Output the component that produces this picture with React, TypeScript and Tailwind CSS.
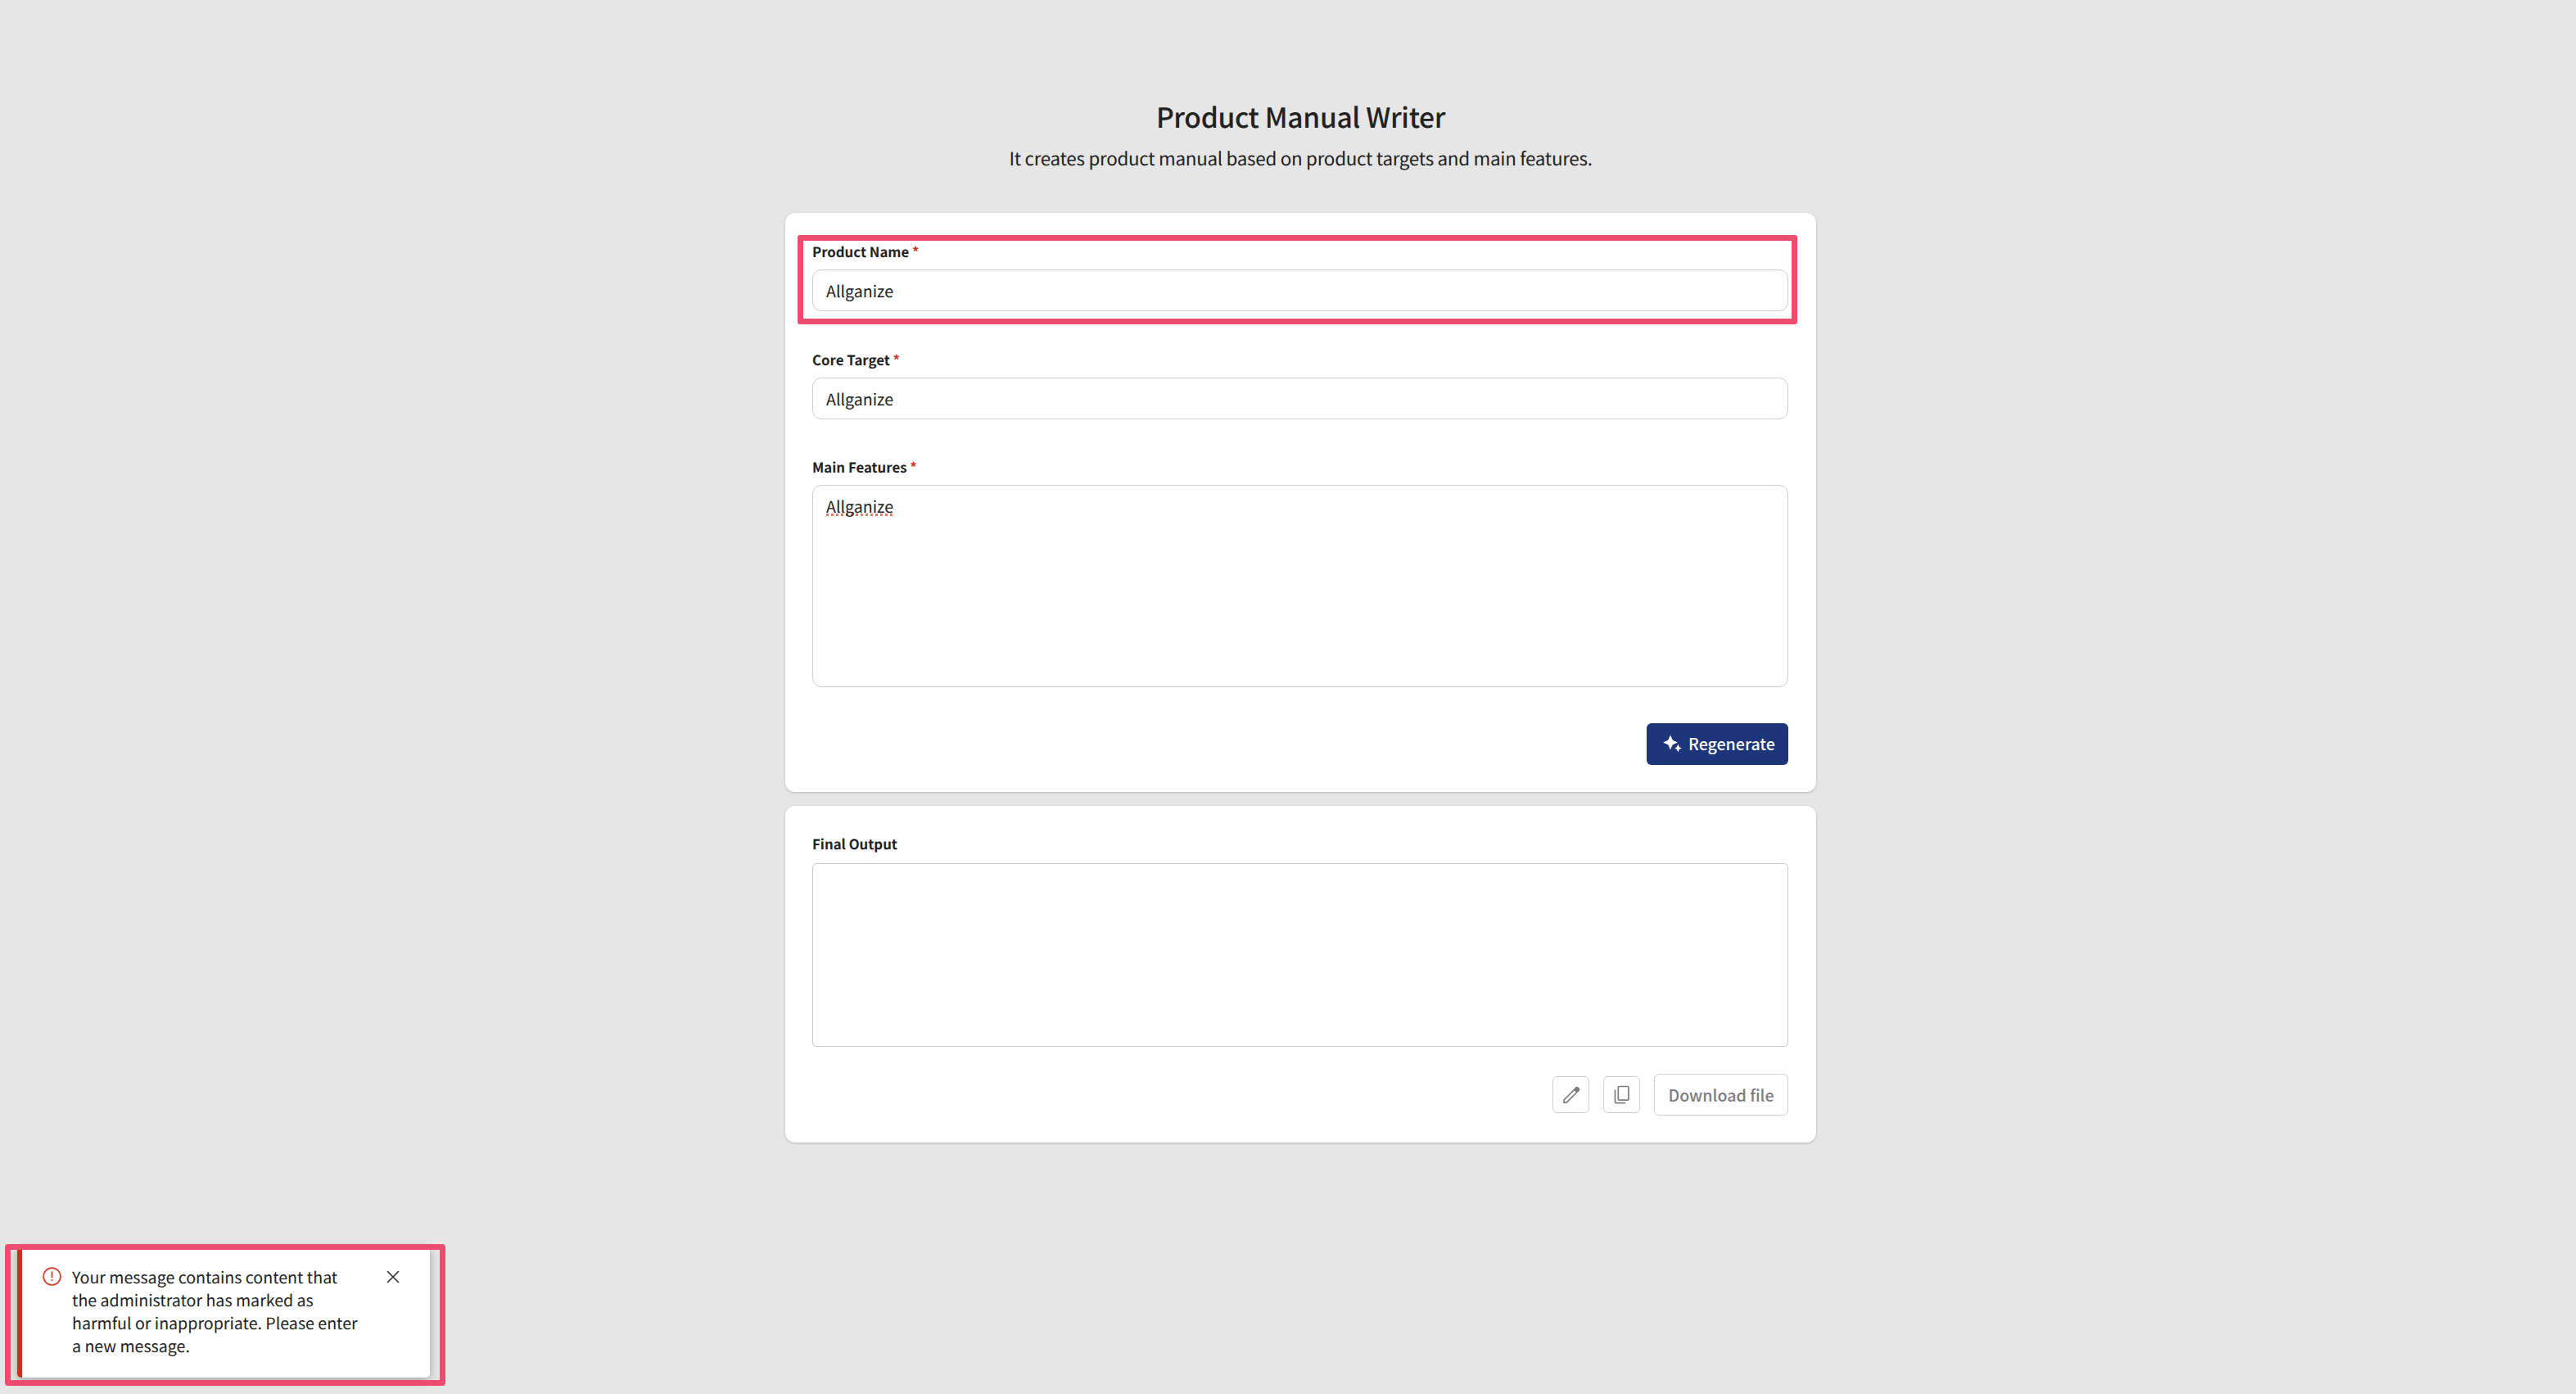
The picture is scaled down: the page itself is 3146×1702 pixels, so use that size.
import { ReactNode } from "react";

const fontStack = { fontFamily: '"Noto Sans CJK KR", "Noto Sans CJK JP", sans-serif' };

interface FieldItem {
  id: string;
  label: string;
  value: string;
  multiline?: boolean;
  highlighted?: boolean;
}

const fields: FieldItem[] = [
  { id: "name", label: "Product Name", value: "Allganize", highlighted: true },
  { id: "target", label: "Core Target", value: "Allganize" },
  { id: "features", label: "Main Features", value: "Allganize", multiline: true },
];

function SparkleIcon() {
  return (
    <svg className="h-[22px] w-[24px] shrink-0" viewBox="0 0 24 22" fill="currentColor">
      <path d="M10 0.500L12.300 5.700Q12.800 6.800 13.800 7.200L19 9.500L13.800 11.800Q12.800 12.200 12.300 13.300L10 18.500L7.700 13.300Q7.200 12.200 6.200 11.800L1 9.500L6.200 7.200Q7.200 6.800 7.700 5.700Z" />
      <path d="M19.400 11.500L20.500 14.300Q20.800 15.100 21.600 15.400L23.800 16.500L21.600 17.600Q20.800 17.900 20.500 18.700L19.400 21.500L18.300 18.700Q18 17.900 17.200 17.600L15 16.500L17.200 15.400Q18 15.100 18.300 14.300Z" />
    </svg>
  );
}

function PencilIcon() {
  return (
    <svg className="h-[22px] w-[22px]" viewBox="0 0 22 22" fill="none" stroke="currentColor" strokeWidth="1.700">
      <path d="M2 20.200V17L17.200 2L20.200 5L5.200 20.200Z" />
      <path d="M14.800 4.400L17.300 1.900Q18 1.300 18.700 1.900L20.200 3.400Q20.800 4.200 20.200 4.900L17.700 7.400Z" fill="currentColor" />
    </svg>
  );
}

function CopyIcon() {
  return (
    <svg className="h-[24px] w-[20px]" viewBox="0 0 20 24" fill="none" stroke="currentColor" strokeWidth="1.700">
      <rect x="5.300" y="1.500" width="12.600" height="16.700" rx="1.200" />
      <path d="M1.500 5.500V20.200Q1.500 21.700 3 21.700H14.200" />
    </svg>
  );
}

function Card({ children, className }: { children: ReactNode; className: string }) {
  return (
    <section
      className={`w-[1259px] rounded-[12px] bg-white pr-[34px] pl-[33px] shadow-[0_1px_3px_rgba(0,0,0,0.22)] ${className}`}
    >
      {children}
    </section>
  );
}

function Field({ field }: { field: FieldItem }) {
  return (
    <div className="relative">
      <label className="block h-[42px] text-[16.800px] leading-[41px] font-bold" htmlFor={field.id}>
        {field.label} <span className="text-[#d0341c]">*</span>
      </label>
      <div
        id={field.id}
        className={`rounded-[11px] border border-[#cfcfcf] px-4 text-[19.600px] ${
          field.multiline ? "h-[247px] pt-[11px] leading-[28px]" : "h-[51px] leading-[49px]"
        }`}
      >
        {field.multiline ? (
          <span className="underline decoration-[#fa7468] decoration-dotted decoration-[3px] underline-offset-1 [text-decoration-skip-ink:none]">
            {field.value}
          </span>
        ) : (
          field.value
        )}
      </div>
      {field.highlighted && (
        <div className="absolute top-0 -left-[18px] h-[109px] w-[1221px] rounded-[3px] border-[7px] border-[#ec4c6d]" />
      )}
    </div>
  );
}

export default function App() {
  return (
    <main
      className="relative flex h-[1702px] w-[3146px] flex-col overflow-hidden bg-[#e6e6e6] pl-[959px] text-[#222222] [text-rendering:geometricPrecision]"
      style={fontStack}
    >
      <header className="w-[1259px] pt-[118px] text-center">
        <h1 className="text-[33.600px] leading-[48px] font-medium tracking-[-0.010em]">Product Manual Writer</h1>
        <p className="mt-[12px] text-[22.400px] leading-[30px] tracking-[-0.290px]">
          It creates product manual based on product targets and main features.
        </p>
      </header>

      <Card className="mt-[52px] h-[707px] pt-[27px]">
        <div className="flex flex-col gap-[38.500px]">
          {fields.map((field) => (
            <Field key={field.id} field={field} />
          ))}
        </div>
        <div className="mt-[44px] flex justify-end">
          <button className="flex h-[51px] w-[173px] items-center gap-[8px] rounded-[6px] bg-[#1c3679] pb-[2px] pl-[19px] text-[19.600px] font-medium text-white">
            <SparkleIcon />
            Regenerate
          </button>
        </div>
      </Card>

      <Card className="mt-[17px] h-[411px] pt-[25px]">
        <h2 className="h-[45px] text-[16.800px] leading-[42px] font-bold">Final Output</h2>
        <div className="h-[224px] rounded-[5px] border border-[#c8c8c8]" />
        <div className="mt-[33px] flex items-center justify-end gap-[17px] text-[#7d7d7d]">
          <button className="flex size-[45px] items-center justify-center rounded-[6px] border border-[#cfcfcf]">
            <PencilIcon />
          </button>
          <button className="flex size-[45px] items-center justify-center rounded-[6px] border border-[#cfcfcf]">
            <CopyIcon />
          </button>
          <button className="h-[51px] w-[164px] rounded-[6px] border border-[#cfcfcf] text-[19.600px] font-medium">
            Download file
          </button>
        </div>
      </Card>

      {/* Toast */}
      <div className="absolute top-[1522px] left-[21px] flex h-[160px] w-[504px] overflow-hidden rounded-[5px] bg-white shadow-[0_3px_12px_rgba(0,0,0,0.3)]">
        <div className="w-[6px] bg-[#cb3018]" />
        <svg className="mt-[25px] ml-[25px] size-[23px]" viewBox="0 0 23 23" fill="none" stroke="#d6402b" strokeWidth="1.700">
          <circle cx="11.500" cy="11.500" r="10.400" />
          <path d="M11.500 5.500V13M11.500 15.200V17" strokeWidth="1.900" />
        </svg>
        <p className="mt-[23px] ml-[13px] w-[361px] text-[19.600px] leading-[28px]">
          Your message contains content that
          <br />
          the administrator has marked as
          <br />
          harmful or inappropriate. Please enter
          <br />
          a new message.
        </p>
        <svg className="mt-[29px] ml-[23px] size-[16px]" viewBox="0 0 16 16" stroke="#333333" strokeWidth="1.700">
          <path d="M1 1L15 15M15 1L1 15" />
        </svg>
      </div>
      <div className="absolute top-[1519px] left-[6px] h-[173px] w-[538px] rounded-[4px] border-[7px] border-[#ec4c6d]" />
    </main>
  );
}
